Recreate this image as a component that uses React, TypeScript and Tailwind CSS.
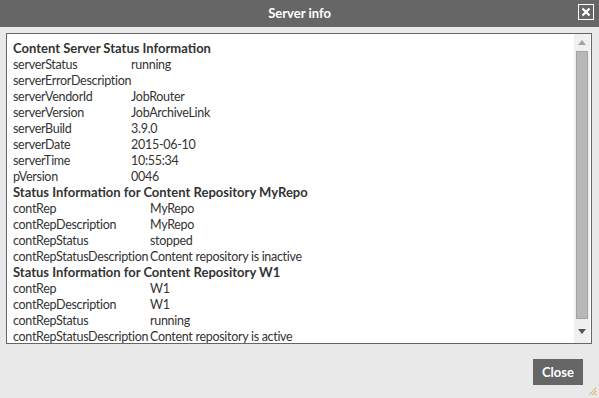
import React from "react";

const server: [string, string][] = [
  ["serverStatus", "running"],
  ["serverErrorDescription", ""],
  ["serverVendorId", "JobRouter"],
  ["serverVersion", "JobArchiveLink"],
  ["serverBuild", "3.9.0"],
  ["serverDate", "2015-06-10"],
  ["serverTime", "10:55:34"],
  ["pVersion", "0046"],
];

const repo1: [string, string][] = [
  ["contRep", "MyRepo"],
  ["contRepDescription", "MyRepo"],
  ["contRepStatus", "stopped"],
  ["contRepStatusDescription", "Content repository is inactive"],
];

const repo2: [string, string][] = [
  ["contRep", "W1"],
  ["contRepDescription", "W1"],
  ["contRepStatus", "running"],
  ["contRepStatusDescription", "Content repository is active"],
];

function Table({ rows, w }: { rows: [string, string][]; w: string }) {
  return (
    <table className="border-collapse text-[12.5px] tracking-[-0.3px]">
      <tbody>
        {rows.map(([k, v], i) => (
          <tr key={i} className="h-[16px]">
            <td className={`p-0 pt-[0.5px] leading-[15.5px] whitespace-nowrap align-top ${w}`}>{k}</td>
            <td className="p-0 pt-[0.5px] leading-[15.5px] whitespace-nowrap align-top">{v}</td>
          </tr>
        ))}
      </tbody>
    </table>
  );
}

export default function App() {
  return (
    <div
      className="w-[599px] h-[398px] bg-[#e9e9e9] flex flex-col relative overflow-hidden"
      style={{ fontFamily: "Lato, 'Open Sans', sans-serif" }}
    >
      <div className="h-[27px] bg-[#666666] flex items-center justify-center relative">
        <span className="text-white font-bold text-[13px] leading-none">Server info</span>
        <div className="absolute left-[578px] top-[4px] w-[16px] h-[16px] border border-white flex items-center justify-center">
          <svg width="10" height="10" viewBox="0 0 10 10">
            <path d="M1.5 1.5 L8.5 8.5 M8.5 1.5 L1.5 8.5" stroke="white" strokeWidth="2.2" />
          </svg>
        </div>
      </div>
      <div className="mt-[6px] ml-[6px] w-[586px] h-[311px] border border-[#666666] bg-white flex">
        <div className="flex-1 overflow-hidden pl-[6px] pt-[6px] text-[13px] leading-[16px] text-[#333333]">
          <div className="font-bold h-[16px]">Content Server Status Information</div>
          <Table rows={server} w="w-[118px]" />
          <div className="font-bold h-[16px]">Status Information for Content Repository MyRepo</div>
          <Table rows={repo1} w="w-[137px]" />
          <div className="font-bold h-[16px]">Status Information for Content Repository W1</div>
          <Table rows={repo2} w="w-[137px]" />
        </div>
        <div className="w-[16px] bg-[#f0f0f0] flex flex-col items-center mr-[1px]">
          <div className="h-[17px] flex items-center justify-center">
            <svg width="8" height="5" viewBox="0 0 8 5">
              <path d="M0 5 L4 0 L8 5 Z" fill="#a3a3a3" />
            </svg>
          </div>
          <div className="w-[12px] h-[268px] bg-[#b8b8b8] border border-[#a3a3a3]" />
          <div className="flex-1 flex items-center justify-center">
            <svg width="8" height="5" viewBox="0 0 8 5">
              <path d="M0 0 L4 5 L8 0 Z" fill="#555555" />
            </svg>
          </div>
        </div>
      </div>
      <div className="flex justify-end mt-[15px] pr-[16px]">
        <button className="w-[50px] h-[26px] bg-[#666666] text-white font-bold text-[13px] leading-none">
          Close
        </button>
      </div>
      <svg className="absolute left-[588px] top-[387px]" width="9" height="9" viewBox="0 0 9 9">
        <path d="M8 1 L1 8 M8 4 L4 8 M8 7 L7 8" stroke="#d49a2a" strokeWidth="1.2" strokeDasharray="1 1" />
      </svg>
    </div>
  );
}
